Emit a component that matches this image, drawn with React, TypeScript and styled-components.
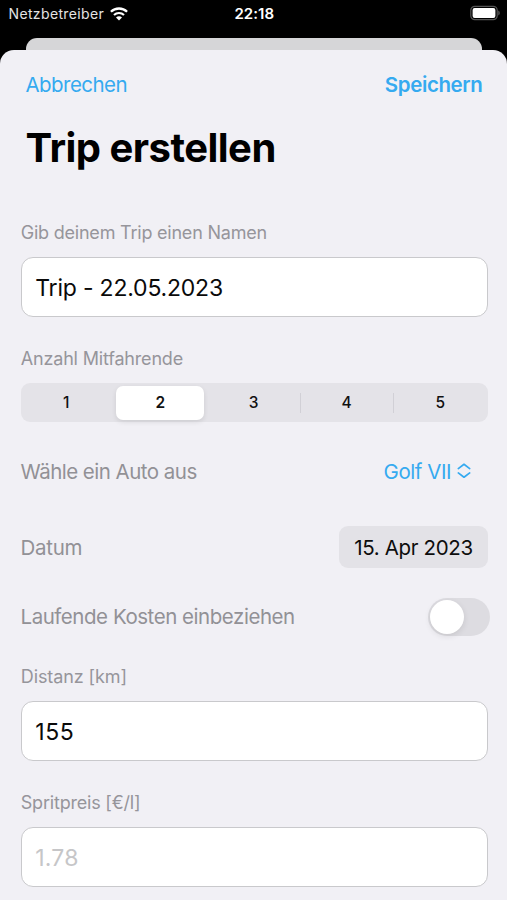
import React, { useState } from "react";
import styled, { createGlobalStyle } from "styled-components";

const GlobalStyle = createGlobalStyle`
  * { box-sizing: border-box; }
  html, body { margin: 0; height: 100%; background: #000; }
  body { font-family: Inter, "Liberation Sans", sans-serif; overflow: hidden; }
  button, input { font: inherit; border: 0; padding: 0; margin: 0; background: none; }
`;

const Screen = styled.div`
  width: 507px;
  height: 900px;
  overflow: hidden;
  display: flex;
  flex-direction: column;
  background: #000;
`;

const StatusBar = styled.header`
  height: 38px;
  flex: none;
  display: grid;
  grid-template-columns: 1fr auto 1fr;
  align-items: start;
  padding: 4px 7px 0 8.5px;
  color: #fff;
  line-height: 20px;
`;

const Carrier = styled.div`
  display: flex;
  align-items: center;
  gap: 6px;
  font-size: 14px;
  letter-spacing: 0.36px;
  color: #e4e4e4;
`;

const Clock = styled.div`
  font-size: 15px;
  font-weight: 600;
  letter-spacing: 0.05px;
`;

const BatterySlot = styled.div`
  display: flex;
  justify-content: flex-end;
  padding-top: 1px;
`;

const BackCard = styled.div`
  height: 12px;
  flex: none;
  margin: 0 25px 0 26px;
  border-radius: 11px 11px 0 0;
  background: #d6d6d8;
`;

const SheetBackdrop = styled.div`
  flex: 1;
  min-height: 0;
`;

const Sheet = styled.main`
  height: 100%;
  border-radius: 14px 14px 0 0;
  background: #f1f0f5;
`;

const NavBar = styled.nav`
  height: 69px;
  display: flex;
  align-items: center;
  justify-content: space-between;
  padding: 0 24.5px 0 25.5px;
`;

const NavButton = styled.button<{ $strong?: boolean }>`
  color: #35aaf0;
  font-size: 20.5px;
  font-weight: ${(p) => (p.$strong ? 600 : 400)};
  letter-spacing: ${(p) => (p.$strong ? "-0.38px" : "-0.55px")};
`;

const Title = styled.h1`
  margin: 0;
  height: 58px;
  padding-left: 25.5px;
  font-size: 40px;
  line-height: 58px;
  font-weight: 700;
  letter-spacing: -0.52px;
  color: #000;
`;

const Form = styled.form`
  display: flex;
  flex-direction: column;
  padding: 38px 20px 0 21px;
`;

const Field = styled.label`
  display: flex;
  flex-direction: column;
  gap: 8px;
`;

const Caption = styled.span<{ $tracking: number }>`
  height: 34px;
  line-height: 35px;
  font-size: 18px;
  letter-spacing: ${(p) => p.$tracking}px;
  margin-left: -0.25px;
  color: #96959b;
`;

const TextInput = styled.input<{ $tracking: number }>`
  && {
    width: 467px;
    height: 60px;
    padding: 1px 14px 0 13.25px;
    border: 1px solid #c9c9cc;
    border-radius: 12px;
    background: #fff;
    color: #0a0a0a;
    font-size: 23px;
    letter-spacing: ${(p) => p.$tracking}px;
    outline: none;
  }
  &&::placeholder {
    color: #c6c6c8;
    opacity: 1;
  }
`;

const SegmentField = styled.div`
  display: flex;
  flex-direction: column;
  gap: 8px;
  margin-top: 23.5px;
`;

const Segments = styled.div`
  height: 39px;
  width: 467px;
  display: grid;
  grid-template-columns: repeat(5, 1fr);
  padding: 2px 1px 2px 0;
  border-radius: 9px;
  background: #e4e3e8;
`;

const Segment = styled.button<{ $selected: boolean; $divider: boolean }>`
  && {
    display: flex;
    align-items: center;
    justify-content: center;
    position: relative;
    margin: 1px 3px 0 2px;
    border-radius: 7px;
    font-size: 15.5px;
    font-weight: ${(p) => (p.$selected ? 600 : 500)};
    color: #111;
    background: ${(p) => (p.$selected ? "#fff" : "transparent")};
    box-shadow: ${(p) => (p.$selected ? "0 2px 5px rgba(0, 0, 0, 0.1)" : "none")};
  }
  &&:first-child {
    margin-right: 5px;
  }
  &&:last-child {
    margin-right: 2px;
  }
  &&::before {
    content: ${(p) => (p.$divider ? '""' : "none")};
    position: absolute;
    left: -3px;
    top: 7px;
    bottom: 7px;
    width: 1px;
    background: #d1d0d6;
  }
`;

const Row = styled.div<{ $height: number; $gap: number }>`
  display: flex;
  align-items: center;
  justify-content: space-between;
  height: ${(p) => p.$height}px;
  margin-top: ${(p) => p.$gap}px;
`;

const RowLabel = styled.span<{ $tracking: number }>`
  margin-left: -0.5px;
  font-size: 20.5px;
  letter-spacing: ${(p) => p.$tracking}px;
  color: #929196;
`;

const MenuButton = styled.button`
  && {
    display: flex;
    align-items: center;
    gap: 6px;
    margin-right: 16px;
    color: #35aaf0;
    font-size: 20.5px;
    letter-spacing: -0.45px;
  }
`;

const DateButton = styled.button`
  && {
    width: 149px;
    height: 42px;
    margin-right: -1px;
    border-radius: 9px;
    background: #e3e2e7;
    color: #0d0d0d;
    font-size: 20.5px;
    letter-spacing: -0.35px;
  }
`;

const Toggle = styled.button<{ $on: boolean }>`
  && {
    display: flex;
    justify-content: ${(p) => (p.$on ? "flex-end" : "flex-start")};
    width: 62px;
    height: 38px;
    margin-right: -3px;
    padding: 2px;
    border-radius: 19px;
    background: ${(p) => (p.$on ? "#34c759" : "#dddce1")};
  }
`;

const Knob = styled.span`
  width: 34px;
  height: 34px;
  border-radius: 50%;
  background: #fff;
  box-shadow: 0 2px 6px rgba(0, 0, 0, 0.1);
`;

const FieldGroup = styled.div<{ $gap: number }>`
  margin-top: ${(p) => p.$gap}px;
`;

const WifiIcon = () => (
  <svg width="18" height="14" viewBox="0 0 18 14" fill="none" stroke="#fff">
    <path d="M0.9 4.8C5.4 0.4 12.6 0.4 17.1 4.8" strokeWidth="2.3" />
    <path d="M4 8C6.8 5.3 11.2 5.3 14 8" strokeWidth="2.2" />
    <path d="M9 13.5L6 10.4C7.7 8.9 10.3 8.9 12 10.4Z" fill="#fff" stroke="none" />
  </svg>
);

const BatteryIcon = () => (
  <svg width="30" height="16" viewBox="0 0 30 16">
    <rect x="0.8" y="1.3" width="26.4" height="13.4" rx="4" fill="none" stroke="#555" strokeWidth="1.2" />
    <rect x="2.6" y="3.1" width="22.8" height="9.8" rx="2" fill="#fff" />
    <path d="M28.3 5.6C30.2 6.4 30.2 9.6 28.3 10.4Z" fill="#5c5c5c" />
  </svg>
);

const UpDownIcon = () => (
  <svg width="14" height="16" viewBox="0 0 14 16" fill="none" stroke="#35aaf0" strokeWidth="1.7" strokeLinecap="round" strokeLinejoin="round">
    <path d="M1.3 5.6L7 1.3L12.7 5.6" />
    <path d="M1.3 9.9L7 14.2L12.7 9.9" />
  </svg>
);

export default function App() {
  const [name, setName] = useState("Trip - 22.05.2023");
  const [passengers, setPassengers] = useState(2);
  const [runningCosts, setRunningCosts] = useState(false);
  const [distance, setDistance] = useState("155");
  const [price, setPrice] = useState("");

  return (
    <Screen>
      <GlobalStyle />
      <StatusBar>
        <Carrier>
          Netzbetreiber
          <WifiIcon />
        </Carrier>
        <Clock>22:18</Clock>
        <BatterySlot>
          <BatteryIcon />
        </BatterySlot>
      </StatusBar>
      <BackCard />
      <SheetBackdrop>
        <Sheet>
          <NavBar>
            <NavButton>Abbrechen</NavButton>
            <NavButton $strong>Speichern</NavButton>
          </NavBar>
          <Title>Trip erstellen</Title>
          <Form onSubmit={(e) => e.preventDefault()}>
            <Field>
              <Caption $tracking={-0.22}>Gib deinem Trip einen Namen</Caption>
              <TextInput $tracking={-0.2} value={name} onChange={(e) => setName(e.target.value)} />
            </Field>
            <SegmentField>
              <Caption $tracking={-0.18}>Anzahl Mitfahrende</Caption>
              <Segments>
                {[1, 2, 3, 4, 5].map((n) => (
                  <Segment
                    key={n}
                    type="button"
                    $selected={n === passengers}
                    $divider={n > 1 && n !== passengers && n - 1 !== passengers}
                    onClick={() => setPassengers(n)}
                  >
                    {n}
                  </Segment>
                ))}
              </Segments>
            </SegmentField>
            <Row $height={50} $gap={24.5}>
              <RowLabel $tracking={-0.52}>Wähle ein Auto aus</RowLabel>
              <MenuButton type="button">
                Golf VII
                <UpDownIcon />
              </MenuButton>
            </Row>
            <Row $height={42} $gap={30}>
              <RowLabel $tracking={-0.28}>Datum</RowLabel>
              <DateButton type="button">15. Apr 2023</DateButton>
            </Row>
            <Row $height={38} $gap={29.5}>
              <RowLabel $tracking={-0.46}>Laufende Kosten einbeziehen</RowLabel>
              <Toggle
                type="button"
                role="switch"
                aria-checked={runningCosts}
                $on={runningCosts}
                onClick={() => setRunningCosts(!runningCosts)}
              >
                <Knob />
              </Toggle>
            </Row>
            <FieldGroup $gap={23.5}>
              <Field>
                <Caption $tracking={-0.1}>Distanz [km]</Caption>
                <TextInput $tracking={0.6} value={distance} onChange={(e) => setDistance(e.target.value)} />
              </Field>
            </FieldGroup>
            <FieldGroup $gap={24}>
              <Field>
                <Caption $tracking={-0.2}>Spritpreis [€/l]</Caption>
                <TextInput $tracking={0.2} placeholder="1.78" value={price} onChange={(e) => setPrice(e.target.value)} />
              </Field>
            </FieldGroup>
          </Form>
        </Sheet>
      </SheetBackdrop>
    </Screen>
  );
}
